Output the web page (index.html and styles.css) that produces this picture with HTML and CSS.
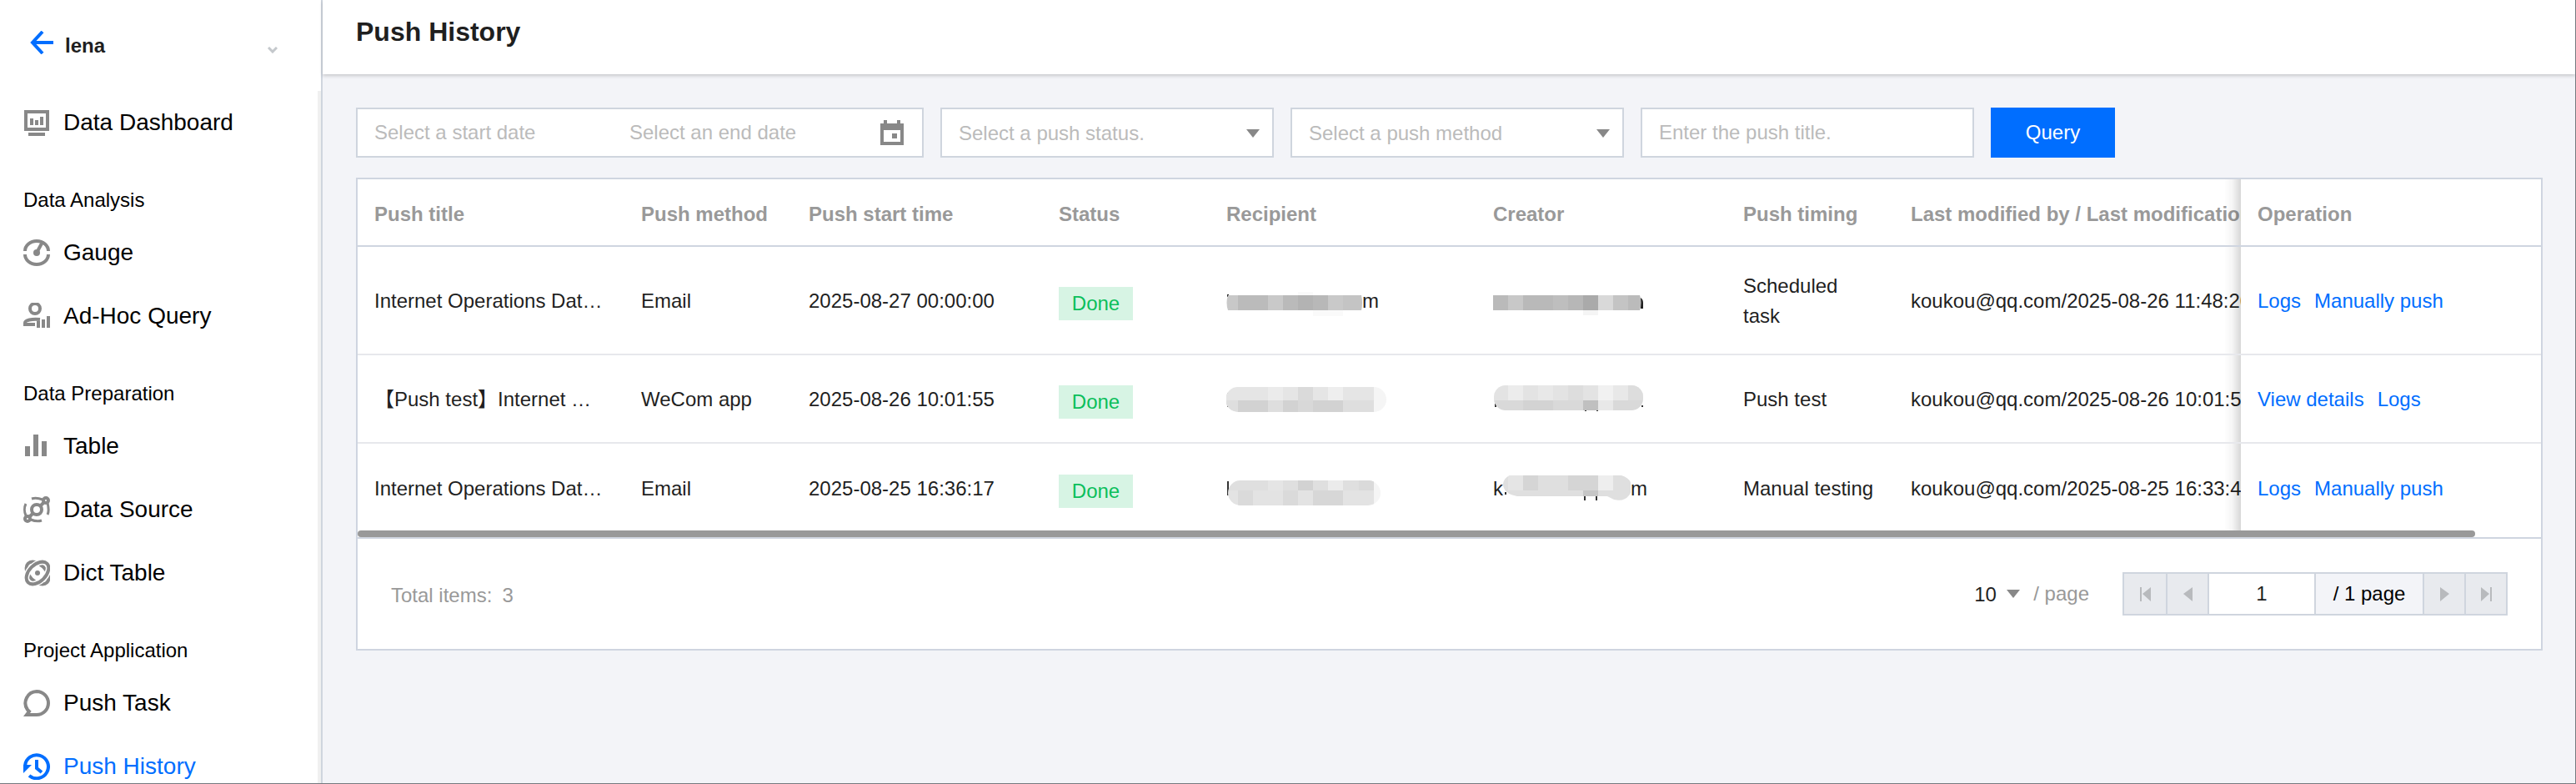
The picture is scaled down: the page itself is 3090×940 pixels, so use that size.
FILE: index.html
```html
<!DOCTYPE html>
<html lang="en">
<head>
    <meta charset="UTF-8">
    <title>Push History</title>
    <link rel="stylesheet" href="styles.css">
</head>
<body>
    <aside class="sidebar">
        <div class="project">
            <a class="back" href="#" aria-label="Back">
                <svg width="28" height="28" viewBox="0 0 28 28"><path d="M28 14H4M15 1L3 14l12 13" fill="none" stroke="#006eff" stroke-width="4"/></svg>
            </a>
            <button class="project-name" type="button">
                <span>lena</span>
                <svg class="chevron" width="12" height="8" viewBox="0 0 12 8"><path d="M1 1l5 5 5-5" fill="none" stroke="#c4c8cc" stroke-width="3"/></svg>
            </button>
        </div>

        <nav class="menu">
            <a class="item" href="#">
                <svg class="icon" viewBox="0 0 32 32"><path d="M3 3h26v21H3z" fill="none" stroke="#888" stroke-width="4"/><path d="M6 28h20v4H6zM8 11h4v8H8zM14 13h4v6h-4zM20 9h4v10h-4z" fill="#888"/></svg>
                Data Dashboard
            </a>

            <h2>Data Analysis</h2>
            <a class="item" href="#">
                <svg class="icon" viewBox="0 0 32 32"><path d="M2 14a14 12 0 0 1 28 0M2 18a14 12 0 0 0 28 0M16 16l7-13" fill="none" stroke="#888" stroke-width="4"/><circle cx="16" cy="16" r="4" fill="#888"/></svg>
                Gauge
            </a>
            <a class="item" href="#">
                <svg class="icon" viewBox="0 0 32 32"><circle cx="14" cy="7" r="6" fill="none" stroke="#888" stroke-width="4"/><path d="M14 26H2v-2c0-3 8-5 18-4" fill="none" stroke="#888" stroke-width="4"/><path d="M16 22h4v8h-4zM22 20h4v10h-4zM28 16h4v14h-4z" fill="#888"/></svg>
                Ad-Hoc Query
            </a>

            <h2>Data Preparation</h2>
            <a class="item" href="#">
                <svg class="icon" viewBox="0 0 32 32"><path d="M2 16h6v12H2zM12 2h6v26h-6zM22 10h6v18h-6z" fill="#888"/></svg>
                Table
            </a>
            <a class="item" href="#">
                <svg class="icon" viewBox="0 0 32 32">
                    <g fill="none" stroke="#888" stroke-width="4">
                        <circle cx="16" cy="16" r="6"/>
                        <path d="M20 12l5-5M12 20l-5 5"/>
                        <path d="M10 3c3-1 8-1 13 1M22 29c-3 1-8 1-13-1M3 9c-2 4-2 10 0 14M29 22c2-4 1-10 0-14" stroke-width="3"/>
                        <circle cx="27" cy="5" r="3"/>
                        <circle cx="5" cy="27" r="3"/>
                    </g>
                </svg>
                Data Source
            </a>
            <a class="item" href="#">
                <svg class="icon" viewBox="0 0 32 32">
                    <g fill="none" stroke="#888" stroke-width="4">
                        <ellipse cx="17" cy="16" rx="16" ry="10" transform="rotate(45 17 16)"/>
                        <ellipse cx="17" cy="16" rx="16" ry="10" transform="rotate(-45 17 16)" stroke="#fff" stroke-width="7"/>
                        <ellipse cx="17" cy="16" rx="16" ry="10" transform="rotate(-45 17 16)"/>
                        <circle cx="17" cy="16" r="3" fill="#888" stroke="none"/>
                    </g>
                </svg>
                Dict Table
            </a>

            <h2>Project Application</h2>
            <a class="item" href="#">
                <svg class="icon" viewBox="0 0 32 32"><path d="M16 2a14 14 0 0 1 0 28H4l3-4-2-2A14 14 0 0 1 16 2z" fill="none" stroke="#888" stroke-width="4"/></svg>
                Push Task
            </a>
            <a class="item active" href="#">
                <svg class="icon" viewBox="0 0 32 32"><path d="M2 15A14 14 0 1 1 7 27M16 8v10l6 5" fill="none" stroke="#006eff" stroke-width="4"/><path d="M0 14h10L0 24z" fill="#006eff"/></svg>
                Push History
            </a>
        </nav>
    </aside>

    <main>
        <header>
            <h1>Push History</h1>
        </header>

        <form class="filters">
            <div class="dates">
                <input type="text" placeholder="Select a start date" aria-label="Start date">
                <input type="text" placeholder="Select an end date" aria-label="End date">
                <svg width="28" height="30" viewBox="0 0 28 30"><path d="M4 0h4v4h12V0h4v4h4v26H0V4h4zM4 12v14h20V12zM14 16h6v6h-6z" fill="#888" fill-rule="evenodd"/></svg>
            </div>
            <div class="select">
                <select aria-label="Push status">
                    <option>Select a push status.</option>
                </select>
                <svg class="caret" width="16" height="10" viewBox="0 0 16 10"><path d="M0 0h16L8 10z" fill="#888"/></svg>
            </div>
            <div class="select">
                <select aria-label="Push method">
                    <option>Select a push method</option>
                </select>
                <svg class="caret" width="16" height="10" viewBox="0 0 16 10"><path d="M0 0h16L8 10z" fill="#888"/></svg>
            </div>
            <input class="text" type="text" placeholder="Enter the push title." aria-label="Push title">
            <button class="query" type="button">Query</button>
        </form>

        <section class="card">
            <div class="table-wrap">
                <table>
                    <colgroup>
                        <col class="c-wide">
                        <col class="c-narrow">
                        <col class="c-mid">
                        <col class="c-narrow">
                        <col class="c-wide">
                        <col class="c-mid">
                        <col class="c-narrow">
                        <col class="c-last">
                        <col class="c-ops">
                    </colgroup>
                    <thead>
                        <tr>
                            <th>Push title</th>
                            <th>Push method</th>
                            <th>Push start time</th>
                            <th>Status</th>
                            <th>Recipient</th>
                            <th>Creator</th>
                            <th>Push timing</th>
                            <th>Last modified by / Last modification time</th>
                            <th class="fixed">Operation</th>
                        </tr>
                    </thead>
                    <tbody>
                        <tr>
                            <td class="nowrap">Internet Operations Dat…</td>
                            <td>Email</td>
                            <td>2025-08-27 00:00:00</td>
                            <td class="status"><span class="tag">Done</span></td>
                            <td>
                                <div class="masked">
                                    <svg width="163" height="40" viewBox="1 0 163 40">
                                        <path d="M2 12h2v3H2z" fill="#222"/>
                                        <path d="M87 9h18v4H87zM105 31h36v7h-36z" fill="#fafafa"/>
                                        <path d="M3 13h12v18H3q-3-9 0-18z" fill="#c8c8c8"/>
                                        <path d="M15 13h36v18H15z" fill="#bbb"/>
                                        <path d="M51 13h18v18H51z" fill="#c9c9c9"/>
                                        <path d="M69 13h18v18H69z" fill="#bababa"/>
                                        <path d="M87 13h18v18H87z" fill="#b3b3b3"/>
                                        <path d="M105 13h18v18h-18z" fill="#b8b8b8"/>
                                        <path d="M123 13h18v18h-18z" fill="#c9c9c9"/>
                                        <path d="M141 13h22q2 9 0 18h-22z" fill="#c4c4c4"/>
                                    </svg>m
                                </div>
                            </td>
                            <td>
                                <div class="masked">
                                    <svg width="184" height="40" viewBox="1 0 184 40">
                                        <path d="M178 16q3 2 3 6v7h-3z" fill="#222"/>
                                        <path d="M109 31h18v6h-18z" fill="#f5f5f5"/>
                                        <path d="M1 13h18v18H1z" fill="#bababa"/>
                                        <path d="M19 13h18v18H19z" fill="#c8c8c8"/>
                                        <path d="M37 13h36v18H37z" fill="#b9b9b9"/>
                                        <path d="M73 13h18v18H73z" fill="#bebebe"/>
                                        <path d="M91 13h18v18H91z" fill="#b7b7b7"/>
                                        <path d="M109 13h18v18h-18z" fill="#aaa"/>
                                        <path d="M127 13h18v18h-18z" fill="#d9d9d9"/>
                                        <path d="M145 13h18v18h-18z" fill="#c4c4c4"/>
                                        <path d="M163 13h14q3 9 0 18h-14z" fill="#bbb"/>
                                    </svg>
                                </div>
                            </td>
                            <td>Scheduled task</td>
                            <td class="nowrap">koukou@qq.com/2025-08-26 11:48:20</td>
                            <td class="fixed"><a href="#">Logs</a><a href="#">Manually push</a></td>
                        </tr>
                        <tr>
                            <td class="nowrap">【Push test】Internet …</td>
                            <td>WeCom app</td>
                            <td>2025-08-26 10:01:55</td>
                            <td class="status"><span class="tag">Done</span></td>
                            <td>
                                <div class="masked">
                                    <svg width="194" height="40" viewBox="1 0 194 40">
                                        <clipPath id="m2"><rect y="5" width="193" height="30" rx="15"/></clipPath>
                                        <path d="M2 12h2v3H2zM2 26h2v3H2z" fill="#666"/>
                                        <g clip-path="url(#m2)">
                                            <path d="M0 5h178v16H0z" fill="#e5e5e5"/>
                                            <path d="M0 21h178v14H0z" fill="#dedede"/>
                                            <path d="M51 5h18v16H51z" fill="#ebebeb"/>
                                            <path d="M87 5h18v16H87z" fill="#dadada"/>
                                            <path d="M123 5h18v16h-18z" fill="#eee"/>
                                            <path d="M15 21h36v14H15zM69 21h18v14H69zM105 21h36v14h-36z" fill="#d2d2d2"/>
                                            <path d="M87 21h18v14H87z" fill="#d8d8d8"/>
                                            <path d="M178 5h16v30h-16z" fill="#f5f5f5"/>
                                        </g>
                                    </svg>
                                </div>
                            </td>
                            <td>
                                <div class="masked">
                                    <svg width="184" height="40" viewBox="1 0 184 40">
                                        <clipPath id="m3"><rect x="2" y="3" width="179" height="30" rx="14"/></clipPath>
                                        <path d="M3 25h2v4H3zM179 27h2v2h-2zM111 32h2v2h-2zM125 32h2v2h-2z" fill="#333"/>
                                        <g clip-path="url(#m3)">
                                            <path d="M0 3h184v18H0z" fill="#e3e3e3"/>
                                            <path d="M0 21h184v12H0z" fill="#d9d9d9"/>
                                            <path d="M19 3h18v18H19z" fill="#ececec"/>
                                            <path d="M55 3h18v18H55zM145 3h18v18h-18z" fill="#e8e8e8"/>
                                            <path d="M91 3h18v18H91zM163 3h18v18h-18z" fill="#ddd"/>
                                            <path d="M127 3h18v18h-18z" fill="#f1f1f1"/>
                                            <path d="M37 21h36v12H37z" fill="#d3d3d3"/>
                                            <path d="M109 21h18v12h-18z" fill="#c0c0c0"/>
                                            <path d="M127 21h18v12h-18z" fill="#e8e8e8"/>
                                        </g>
                                    </svg>
                                </div>
                            </td>
                            <td>Push test</td>
                            <td class="nowrap">koukou@qq.com/2025-08-26 10:01:55</td>
                            <td class="fixed"><a href="#">View details</a><a href="#">Logs</a></td>
                        </tr>
                        <tr>
                            <td class="nowrap">Internet Operations Dat…</td>
                            <td>Email</td>
                            <td>2025-08-25 16:36:17</td>
                            <td class="status"><span class="tag">Done</span></td>
                            <td>
                                <div class="masked">
                                    <svg width="188" height="40" viewBox="1 0 188 40">
                                        <clipPath id="m4"><rect x="3" y="10" width="183" height="30" rx="15"/></clipPath>
                                        <path d="M2 11h2v17H2z" fill="#333"/>
                                        <g clip-path="url(#m4)">
                                            <path d="M0 10h178v12H0z" fill="#dfdfdf"/>
                                            <path d="M0 22h178v18H0z" fill="#e3e3e3"/>
                                            <path d="M51 10h18v12H51z" fill="#e5e5e5"/>
                                            <path d="M87 10h18v12H87z" fill="#d2d2d2"/>
                                            <path d="M123 10h18v12h-18z" fill="#ebebeb"/>
                                            <path d="M160 10h18v12h-18zM15 22h18v18H15zM69 22h18v18H69z" fill="#dadada"/>
                                            <path d="M105 22h36v18h-36z" fill="#d7d7d7"/>
                                            <path d="M178 10h10v30h-10z" fill="#f5f5f5"/>
                                        </g>
                                    </svg>
                                </div>
                            </td>
                            <td>
                                <div class="masked">k<svg width="153" height="40" viewBox="0 0 153 40">
                                        <clipPath id="m5"><path d="M8 4h134q12 4 12 13 0 8-3 11-6 8-18 5l-8-4H17Q0 26 0 14q1-7 8-10z"/></clipPath>
                                        <path d="M2 24h2v3H2zM97 29h2v5h-2zM111 29h2v5h-2z" fill="#333"/>
                                        <g clip-path="url(#m5)">
                                            <path d="M0 4h154v36H0z" fill="#dfdfdf"/>
                                            <path d="M6 4h18v18H6z" fill="#e5e5e5"/>
                                            <path d="M24 4h18v18H24zM78 4h18v18H78zM96 4h18v18H96z" fill="#d5d5d5"/>
                                            <path d="M96 22h18v8H96z" fill="#c6c6c6"/>
                                            <path d="M114 4h18v18h-18z" fill="#eee"/>
                                        </g>
                                    </svg>m</div>
                            </td>
                            <td>Manual testing</td>
                            <td class="nowrap">koukou@qq.com/2025-08-25 16:33:45</td>
                            <td class="fixed"><a href="#">Logs</a><a href="#">Manually push</a></td>
                        </tr>
                    </tbody>
                </table>
                <div class="scrollbar"><div class="thumb"></div></div>
            </div>

            <footer>
                <p class="total"><span>Total items:</span><span>3</span></p>
                <div class="page-size">
                    <select id="size">
                        <option>10</option>
                    </select>
                    <svg width="16" height="10" viewBox="0 0 16 10"><path d="M0 0h16L8 10z" fill="#888"/></svg>
                    <label for="size">/ page</label>
                </div>
                <div class="pager">
                    <button type="button" aria-label="First page"><svg width="13" height="17" viewBox="0 0 13 17"><path d="M0 0h2v17H0zM13 0v17L3 8z" fill="#b8babd"/></svg></button>
                    <button type="button" aria-label="Previous page"><svg width="13" height="17" viewBox="0 0 13 17"><path d="M12 0v17L1 8z" fill="#b8babd"/></svg></button>
                    <input type="text" value="1" aria-label="Page number">
                    <span class="pages">/ 1 page</span>
                    <button type="button" aria-label="Next page"><svg width="13" height="17" viewBox="0 0 13 17"><path d="M1 0v17l11-9z" fill="#b8babd"/></svg></button>
                    <button type="button" aria-label="Last page"><svg width="13" height="17" viewBox="0 0 13 17"><path d="M11 0h2v17h-2zM0 0v17l10-9z" fill="#b8babd"/></svg></button>
                </div>
            </footer>
        </section>
    </main>
</body>
</html>
```
FILE: styles.css
```css
* {
    margin: 0;
    padding: 0;
    box-sizing: border-box;
}

body {
    display: flex;
    height: 100vh;
    overflow: hidden;
    border-right: 1px solid #75797f;
    border-bottom: 1px solid #75797f;
    background: #f3f4f8;
    color: #1f1f1f;
    font-family: "Liberation Sans", "Noto Sans CJK SC", Arial, sans-serif;
    font-size: 24px;
}

a {
    color: #006eff;
    text-decoration: none;
}

button, input, select {
    font: inherit;
    color: inherit;
    border: none;
    border-radius: 0;
    background: none;
    outline: none;
    appearance: none;
}

svg {
    display: block;
    flex: none;
}

/* sidebar */
.sidebar {
    display: flex;
    flex-direction: column;
    flex: none;
    width: 387px;
    border-right: 2px solid #cfd5de;
    background: #fff;
}

.project {
    display: flex;
    align-items: center;
    flex: none;
    height: 109px;
    padding: 0 52px 0 36px;
    gap: 14px;
}

.back {
    margin-bottom: 8px;
}

.project-name {
    display: flex;
    flex: 1;
    align-items: center;
    justify-content: space-between;
    font-weight: bold;
}

.chevron {
    margin-top: 10px;
}

.menu {
    flex: 1;
    overflow: hidden;
    border-right: 4px solid #f0f0f0;
    color: #000;
}

.menu h2 {
    padding: 40px 28px 10px;
    font-size: 24px;
    font-weight: normal;
    line-height: 30px;
}

.item {
    display: flex;
    align-items: center;
    gap: 16px;
    height: 76px;
    padding-left: 28px;
    font-size: 28px;
    color: #000;
}

.icon {
    width: 32px;
    height: 32px;
}

.active {
    color: #006eff;
}

/* content */
main {
    flex: 1;
    min-width: 0;
}

header {
    height: 89px;
    padding: 19px 40px;
    background: #fff;
    box-shadow: 0 2px 4px rgba(0, 0, 0, .18);
}

h1 {
    font-size: 32px;
    line-height: 38px;
}

.filters {
    display: flex;
    gap: 20px;
    padding: 40px 40px 24px;
}

.dates, .select select, .text {
    height: 60px;
    border: 2px solid #cfd5de;
    background: #fff;
}

.dates {
    display: flex;
    align-items: center;
    width: 681px;
    padding: 0 22px 0 20px;
}

.dates input {
    flex: 1;
    min-width: 0;
}

.dates input:first-child {
    flex: 0 0 306px;
}

.select {
    position: relative;
    width: 400px;
}

.select select {
    width: 100%;
    padding: 0 20px;
    color: #bbb;
}

.caret {
    position: absolute;
    top: 26px;
    right: 17px;
    pointer-events: none;
}

.text {
    width: 400px;
    padding: 0 20px;
}

::placeholder {
    color: #bbb;
    opacity: 1;
}

.query {
    width: 149px;
    background: #006eff;
    color: #fff;
}

/* table */
.card {
    margin: 0 39px 0 40px;
    border: 2px solid #cfd5e0;
    background: #fff;
}

.table-wrap {
    position: relative;
    overflow-x: auto;
    padding-bottom: 6px;
    scrollbar-width: none;
    border-bottom: 2px solid #cfd5e0;
}

table {
    width: 2703px;
    min-width: 100%;
    table-layout: fixed;
    border-spacing: 0;
}

.c-wide {
    width: 320px;
}

.c-mid {
    width: 300px;
}

.c-narrow {
    width: 201px;
}

.c-ops {
    width: 360px;
}

th, td {
    padding: 29px 20px 27px;
    text-align: left;
    line-height: 36px;
    border-bottom: 2px solid #e7e8ec;
}

th {
    padding: 24px 20px 19px;
    border-bottom: 2px solid #cfd5e0;
    color: #999;
    white-space: nowrap;
}

td {
    height: 106px;
}

tbody tr:last-child td {
    border-bottom: none;
}

.nowrap {
    white-space: nowrap;
}

.status {
    padding-top: 34px;
}

.tag {
    display: block;
    width: 89px;
    line-height: 40px;
    background: #d7f4e4;
    color: #0abf5b;
    text-align: center;
}

.masked {
    display: flex;
    align-items: center;
    height: 36px;
}

.fixed {
    position: sticky;
    right: 0;
    background: #fff;
}

.fixed::before {
    content: "";
    position: absolute;
    top: 0;
    bottom: 0;
    left: -20px;
    width: 20px;
    background: linear-gradient(to right, rgba(0, 0, 0, 0), rgba(0, 0, 0, .04) 50%, rgba(0, 0, 0, .16));
}

.fixed a + a {
    margin-left: 16px;
}

.scrollbar {
    position: absolute;
    left: 0;
    right: 0;
    bottom: 0;
}

.thumb {
    width: 97%;
    height: 8px;
    border-radius: 4px;
    background: #999;
}

/* paging */
footer {
    display: flex;
    align-items: center;
    padding: 40px;
}

.total {
    display: flex;
    gap: 12px;
    margin-right: auto;
    padding-top: 4px;
    color: #999;
}

.page-size {
    display: flex;
    align-items: center;
    gap: 12px;
    margin-right: 40px;
}

.page-size label {
    margin-left: 4px;
    color: #999;
}

.pager {
    display: flex;
    height: 52px;
    border: 2px solid #cfd5de;
}

.pager > * + * {
    border-left: 2px solid #cfd5de;
}

.pager button {
    display: flex;
    align-items: center;
    justify-content: center;
    width: 50px;
    background: #e8eaee;
}

.pager input {
    width: 128px;
    text-align: center;
}

.pages {
    width: 130px;
    background: #f3f4f8;
    color: #000;
    line-height: 48px;
    text-align: center;
}
```
